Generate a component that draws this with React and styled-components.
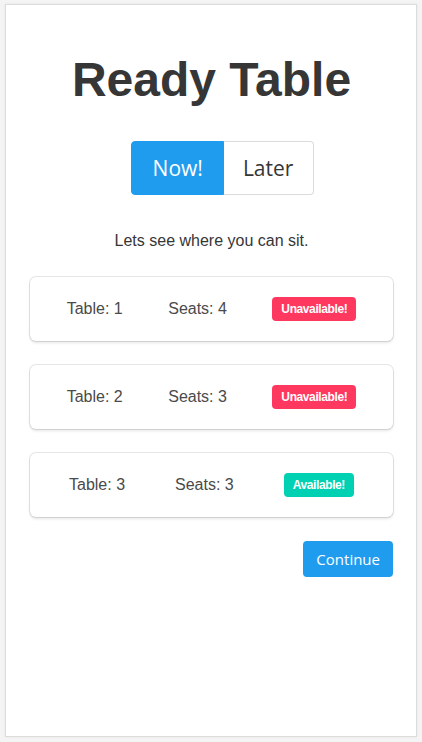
import React, { useState } from "react";
import styled, { createGlobalStyle } from "styled-components";

const Global = createGlobalStyle`
  html, body { margin: 0; padding: 0; }
  body {
    background: #f4f4f4;
    font-family: "Liberation Sans", Arial, sans-serif;
    color: #4a4a4a;
  }
`;

const Page = styled.div`
  padding: 4px 5px 5px 5px;
`;

const Panel = styled.main`
  box-sizing: border-box;
  width: 412px;
  height: 733px;
  background: #fff;
  border: 1px solid #dcdcdc;
  box-shadow: 0 0 3px rgba(0, 0, 0, 0.06);
  padding: 0 23px 0 24px;
  display: flex;
  flex-direction: column;
`;

const Title = styled.h1`
  margin: 51px 0 0;
  font-family: "Liberation Sans", Arial, sans-serif;
  font-weight: 700;
  font-size: 48px;
  line-height: 48px;
  color: #363636;
  text-align: center;
`;

const Toggle = styled.div`
  display: flex;
  justify-content: center;
  margin-top: 37px;
  padding-left: 22px;
`;

const ToggleButton = styled.button`
  height: 54px;
  padding: 0 ${(p) => (p.$active ? "20px" : "19px")};
  font-family: "Open Sans", "Noto Sans", sans-serif;
  font-size: 21px;
  border: 1px solid ${(p) => (p.$active ? "#209cee" : "#dbdbdb")};
  background: ${(p) => (p.$active ? "#209cee" : "#fff")};
  color: ${(p) => (p.$active ? "#fff" : "#363636")};
  cursor: pointer;
  &:first-child { border-radius: 4px 0 0 4px; padding-left: 21px; }
  &:last-child { border-radius: 0 4px 4px 0; border-left: none; padding-right: 20px; }
`;

const Subtitle = styled.p`
  margin: 37px 0 0;
  font-size: 16px;
  line-height: 18px;
  text-align: center;
  color: #363636;
`;

const List = styled.div`
  display: flex;
  flex-direction: column;
  gap: 24px;
  margin-top: 27px;
`;

const Card = styled.div`
  box-sizing: border-box;
  height: 64px;
  padding: 0 14px;
  border-radius: 6px;
  background: #fff;
  box-shadow: 0 2px 3px rgba(10, 10, 10, 0.1), 0 0 0 1px rgba(10, 10, 10, 0.1);
  display: flex;
  align-items: center;
  justify-content: space-around;
`;

const Cell = styled.span`
  font-size: 16px;
  color: #4a4a4a;
`;

const Tag = styled.span`
  display: inline-flex;
  align-items: center;
  height: 24px;
  padding: 0 9px;
  border-radius: 4px;
  font-size: 12px;
  font-weight: 700;
  letter-spacing: -0.4px;
  color: #fff;
  background: ${(p) => (p.$available ? "#00d1b2" : "#ff3860")};
`;

const Footer = styled.div`
  display: flex;
  justify-content: flex-end;
  margin-top: 24px;
`;

const Continue = styled.button`
  height: 36px;
  padding: 0 13px;
  border: none;
  border-radius: 4px;
  background: #209cee;
  color: #fff;
  font-family: "Open Sans", "Noto Sans", sans-serif;
  font-size: 15px;
  cursor: pointer;
`;

const tables = [
  { id: 1, seats: 4, available: false },
  { id: 2, seats: 3, available: false },
  { id: 3, seats: 3, available: true },
];

export default function App() {
  const [mode, setMode] = useState("now");
  return (
    <Page>
      <Global />
      <Panel>
        <Title>Ready Table</Title>
        <Toggle>
          <ToggleButton $active={mode === "now"} onClick={() => setMode("now")}>
            Now!
          </ToggleButton>
          <ToggleButton $active={mode === "later"} onClick={() => setMode("later")}>
            Later
          </ToggleButton>
        </Toggle>
        <Subtitle>Lets see where you can sit.</Subtitle>
        <List>
          {tables.map((t) => (
            <Card key={t.id}>
              <Cell>Table: {t.id}</Cell>
              <Cell>Seats: {t.seats}</Cell>
              <Tag $available={t.available}>
                {t.available ? "Available!" : "Unavailable!"}
              </Tag>
            </Card>
          ))}
        </List>
        <Footer>
          <Continue>Continue</Continue>
        </Footer>
      </Panel>
    </Page>
  );
}
